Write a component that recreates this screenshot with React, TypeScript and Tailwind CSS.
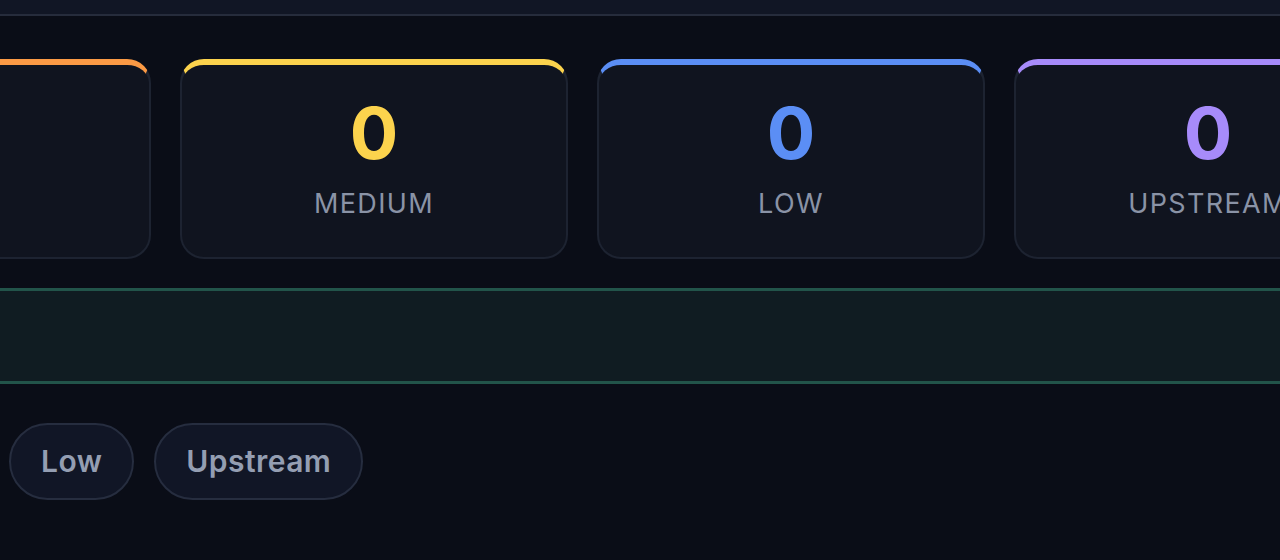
import React from "react";

const cards = [
  { value: "0", label: "HIGH", color: "text-[#fb923c]", border: "border-t-[#fb9a45]" },
  { value: "0", label: "MEDIUM", color: "text-[#fcd34d]", border: "border-t-[#fcd34d]" },
  { value: "0", label: "LOW", color: "text-[#5b8ef5]", border: "border-t-[#5b8ef5]" },
  { value: "0", label: "UPSTREAM", color: "text-[#a78bfa]", border: "border-t-[#a78bfa]" },
];

export default function App() {
  return (
    <div
      className="w-[1280px] h-[560px] overflow-hidden bg-[#0a0d17]"
      style={{ fontFamily: "Inter, 'Noto Sans', sans-serif" }}
    >
      <div className="h-[16px] bg-[#111625] border-b-2 border-[#262c3c]" />
      <div className="flex gap-[29px] ml-[-237px] mt-[43px]">
        {cards.map((c) => (
          <div
            key={c.label}
            className={`shrink-0 w-[388px] h-[200px] rounded-[24px] bg-[#10141f] border-2 border-[#1d2331] border-t-[6px] ${c.border} flex flex-col items-center pt-[32px] gap-[21px]`}
          >
            <div className={`text-[72px] leading-none font-bold ${c.color}`}>{c.value}</div>
            <div className="text-[27px] leading-[28px] tracking-[0.05em] text-[#8a93a6]">{c.label}</div>
          </div>
        ))}
      </div>
      <div className="mt-[29px] h-[96px] bg-[#101c22] border-y-[3px] border-[#22544a]" />
      <div className="flex gap-[20px] ml-[9px] mt-[39px]">
        {["Low", "Upstream"].map((p) => (
          <div
            key={p}
            className="h-[77px] px-[30px] rounded-full border-2 border-[#262d3f] bg-[#111626] flex items-center text-[30px] font-semibold tracking-[0.015em] text-[#949eb2]"
          >
            {p}
          </div>
        ))}
      </div>
    </div>
  );
}
